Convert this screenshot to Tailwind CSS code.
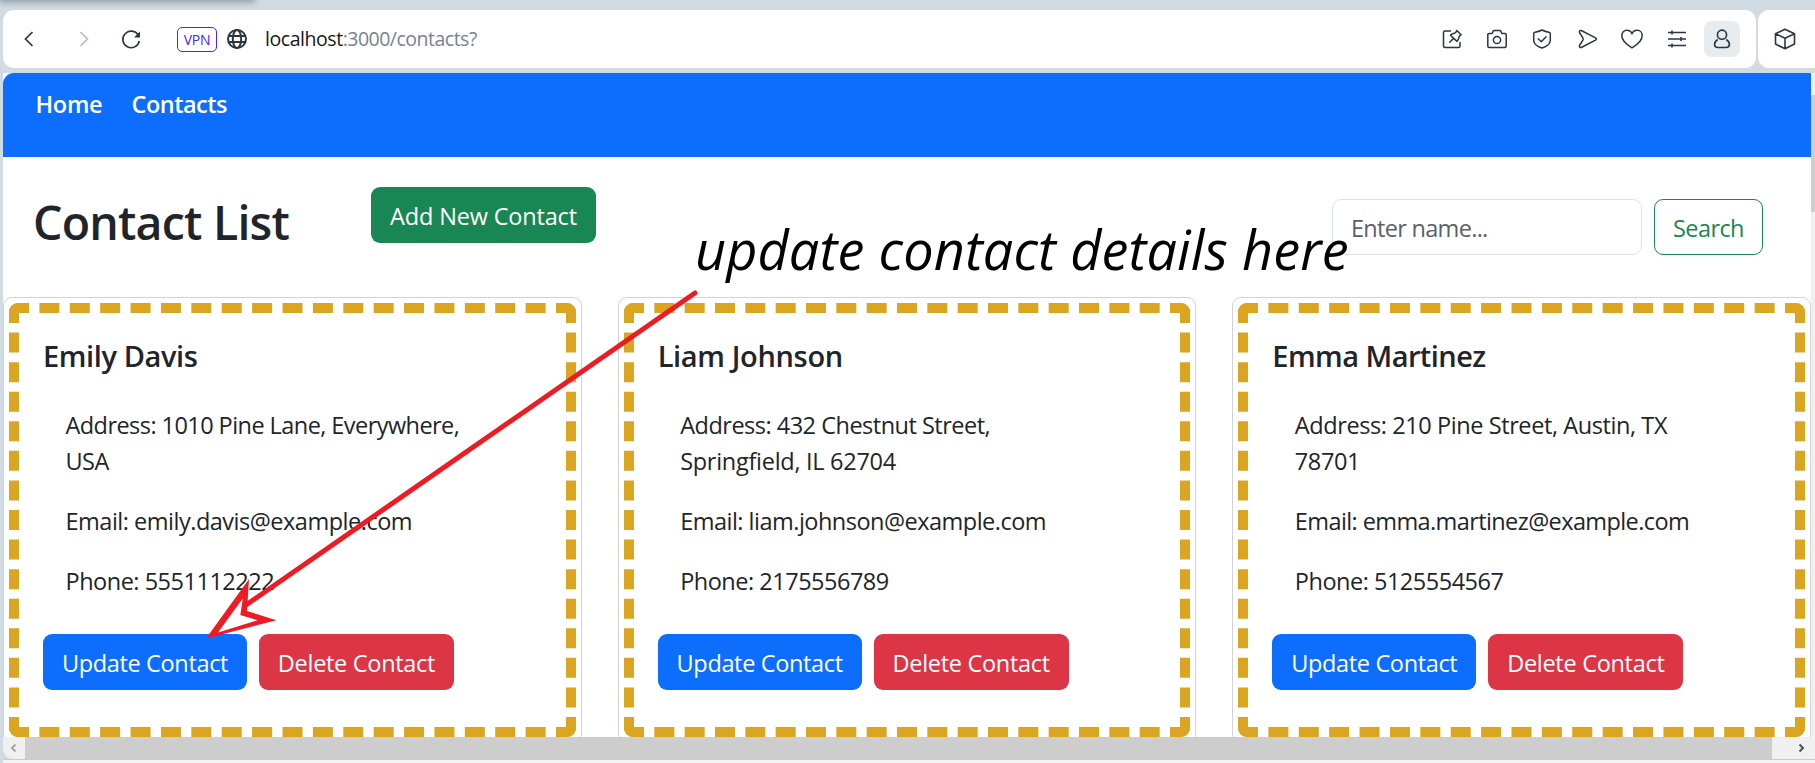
<!DOCTYPE html>
<html lang="en">
<head>
<meta charset="utf-8">
<title>Contacts</title>
<script src="https://cdn.jsdelivr.net/npm/@tailwindcss/browser@4"></script>
</head>
<body class="relative flex h-[763px] w-[1815px] flex-col overflow-hidden bg-[#d0dbe4] font-['Open_Sans','Noto_Sans',sans-serif] text-[23.5px] leading-9 text-[#212529]">

  <!-- tab strip -->
  <div class="h-[10px] shrink-0 overflow-hidden">
    <div class="-mt-3 h-3 w-[253px] bg-[#a3acb3] shadow-[0_0_7px_2px_#8d969d]"></div>
  </div>

  <!-- toolbar -->
  <header class="ml-[3px] flex h-[58px] shrink-0 gap-[2px] text-[#2a3640]">
    <div class="flex w-[1753px] shrink-0 items-center rounded-[11px] bg-white pr-4">
      <svg class="ml-[14px] size-6" viewBox="0 0 24 24" fill="none" stroke="currentColor" stroke-width="1.7"><path d="M15.5 5 8.5 12l7 7"/></svg>
      <svg class="ml-[31px] size-6 text-[#b9bdc1]" viewBox="0 0 24 24" fill="none" stroke="currentColor" stroke-width="1.7"><path d="m8.5 5 7 7-7 7"/></svg>
      <svg class="ml-[23px] size-6" viewBox="0 0 24 24" fill="none" stroke="currentColor" stroke-width="1.6"><path d="M19.3 8.2A8.3 8.3 0 1 0 20.3 14"/><path d="M21 4.4v6h-6z" fill="currentColor" stroke="none"/></svg>
      <div class="ml-[34px] flex h-[25px] w-10 items-center justify-center rounded-[5px] border border-[#4d22ff] pt-[2px] text-[14px] leading-none tracking-[-0.2px] text-[#4d22ff]">VPN</div>
      <svg class="ml-2 size-6" viewBox="0 0 24 24" fill="none" stroke="currentColor" stroke-width="2"><circle cx="12" cy="12" r="9"/><ellipse cx="12" cy="12" rx="4.2" ry="9"/><path d="M3 9h18M3 15h18"/></svg>
      <div class="ml-[16px] flex text-[19.5px] text-[#14181c]"><span class="tracking-[-0.45px]">localhost</span><span class="tracking-[-0.5px] text-[#758391]">:3000/contacts?</span></div>
      <div class="ml-auto flex gap-[9px]">
        <span class="flex size-9 items-center justify-center"><svg class="size-6" viewBox="0 0 24 24" fill="none" stroke="currentColor" stroke-width="1.5" stroke-linejoin="round" stroke-linecap="round"><path d="M10.5 4H5Q3.5 4 3.5 5.500V19Q3.500 20.500 5 20.500H18.500Q20 20.500 20 19V15.500"/><path d="m16.800 3.500 4.300 4.300-1.700 1.200-1.400 4-1 1.400-6.600-6.200 1.400-1 3.900-1.600zM13.400 11.600l-3.700 3.600"/></svg></span>
        <span class="flex size-9 items-center justify-center"><svg class="size-6" viewBox="0 0 24 24" fill="none" stroke="currentColor" stroke-width="1.5" stroke-linejoin="round"><path d="M4 6.500h3.200l1-2.500q.3-.5 1-.5h5.600q.7 0 1 .5l1 2.500H20q1.200 0 1.200 1.200V19q0 1.500-1.500 1.500H4.300q-1.500 0-1.500-1.500V7.700Q2.800 6.500 4 6.500Z"/><circle cx="12" cy="13" r="3.600"/></svg></span>
        <span class="flex size-9 items-center justify-center"><svg class="size-6" viewBox="0 0 24 24" fill="none" stroke="currentColor" stroke-width="1.5" stroke-linejoin="round" stroke-linecap="round"><path d="M12 3Q15 4.700 19 5.300q1.300.2 1.300 1.500V13.500Q20 18.500 12 21 4 18.500 3.700 13.500V6.800Q3.700 5.500 5 5.300 9 4.700 12 3Z"/><path d="m8.300 11.700 3 3 4.800-5"/></svg></span>
        <span class="flex size-9 items-center justify-center"><svg class="ml-[2px] size-6" viewBox="0 0 24 24" fill="none" stroke="currentColor" stroke-width="1.500" stroke-linejoin="round"><path d="M5.300 3.500 19.500 10.800q1.800 1.200 0 2.400L5.300 20.500Q3 21 3.500 18.500L7 12.800q.4-.8 0-1.600L3.500 5.500Q3 3 5.300 3.500Z"/></svg></span>
        <span class="flex size-9 items-center justify-center"><svg class="size-6" viewBox="0 0 24 24" fill="none" stroke="currentColor" stroke-width="1.500" stroke-linejoin="round"><path d="M12 20.800C8 18.500 1.800 14 1.800 8.500 1.800 5.300 4 3.300 6.700 3.300 9 3.300 11.200 4.500 12 6.800 12.800 4.500 15 3.300 17.300 3.300 20 3.300 22.200 5.300 22.200 8.500 22.200 14 16 18.500 12 20.800Z"/></svg></span>
        <span class="flex size-9 items-center justify-center"><svg class="size-6" viewBox="0 0 24 24" fill="none" stroke="currentColor" stroke-width="1.600"><path d="M3 5.500h18M3 12h18M3 18.500h18M7 3.500v4M16 10v4M7 16.500v4"/></svg></span>
        <span class="flex size-9 items-center justify-center rounded-[8px] bg-[#e7ecf0]"><svg class="size-6" viewBox="0 0 24 24" fill="none" stroke="currentColor" stroke-width="1.600"><circle cx="12" cy="7.700" r="4.600"/><path d="M7.700 12.500Q4.600 14.500 4.600 17.500 4.600 20.500 8 20.500H16Q19.400 20.500 19.400 17.500 19.400 14.500 16.300 12.500"/></svg></span>
      </div>
    </div>
    <div class="flex w-[70px] shrink-0 items-center rounded-[11px] bg-white pl-[15px]">
      <svg class="size-6" viewBox="0 0 24 24" fill="none" stroke="currentColor" stroke-width="1.600" stroke-linejoin="round"><path d="M12 2.300 21.500 6.800V17L12 21.800 2.500 17V6.800ZM2.500 6.800 12 11.300l9.500-4.500M12 11.300v10.500"/></svg>
    </div>
  </header>

  <!-- page viewport -->
  <div class="mt-[5px] ml-[3px] flex h-[664px] shrink-0 bg-white">
    <main class="w-[1808px] shrink-0 overflow-hidden">
      <nav class="flex h-[84px] gap-[26px] rounded-tl-[11px] bg-[#0d6efd] pt-[13px] pl-[32.5px] font-semibold text-white">
        <a class="w-[70px] tracking-[-0.3px]">Home</a>
        <a class="tracking-[-0.5px]">Contacts</a>
      </nav>

      <div class="flex h-[140px] pl-[30px]">
        <h1 class="mt-[36px] w-[338px] text-[46.5px] leading-[58px] font-semibold tracking-[-0.8px]">Contact List</h1>
        <a class="mt-[30px] flex h-14 w-[225px] items-center justify-center rounded-[9px] bg-[#198754] pt-[2px] tracking-[-0.17px] text-white">Add New Contact</a>
        <div class="mt-[42px] ml-auto flex gap-3 pr-[48px]">
          <div class="flex h-14 w-[310px] items-center rounded-[9px] border border-[#dee2e6] pt-[2px] pl-[18px] tracking-[-0.7px] text-[#5b6166]">Enter name...</div>
          <div class="flex h-14 w-[109px] items-center justify-center rounded-[9px] border border-[#198754] pt-[2px] tracking-[-0.6px] text-[#198754]">Search</div>
        </div>
      </div>

      <div class="grid grid-cols-3 gap-9">
        <article class="h-[446px] rounded-[9px] border border-[#d2d3d4] p-[5px]">
          <div class="overflow-hidden rounded-[9px]">
            <div class="h-[434px] border-10 border-dashed border-[#daa520] px-6 pt-[25px]">
              <h5 class="text-[29px] font-semibold tracking-[-0.4px]">Emily Davis</h5>
              <div class="mt-[33px] flex flex-col gap-6 pl-[22.5px]">
                <p class="tracking-[-0.56px]">Address: 1010 Pine Lane, Everywhere,<br>USA</p>
                <p class="tracking-[-0.49px]">Email: emily.davis@example.com</p>
                <p class="tracking-[-0.49px]">Phone: 5551112222</p>
              </div>
              <div class="mt-[35px] flex gap-3 text-white">
                <a class="flex h-14 w-[204px] items-center justify-center rounded-[9px] bg-[#0d6efd] pt-[2px] tracking-[-0.35px]">Update Contact</a>
                <a class="flex h-14 w-[195px] items-center justify-center rounded-[9px] bg-[#dc3545] pt-[2px] tracking-[-0.3px]">Delete Contact</a>
              </div>
            </div>
          </div>
        </article>

        <article class="h-[446px] rounded-[9px] border border-[#d2d3d4] p-[5px]">
          <div class="overflow-hidden rounded-[9px]">
            <div class="h-[434px] border-10 border-dashed border-[#daa520] px-6 pt-[25px]">
              <h5 class="text-[29px] font-semibold tracking-[-0.35px]">Liam Johnson</h5>
              <div class="mt-[33px] flex flex-col gap-6 pl-[22.5px]">
                <p><span class="tracking-[-0.5px]">Address: 432 Chestnut Street,</span><br><span class="tracking-[-0.28px]">Springfield, IL 62704</span></p>
                <p class="tracking-[-0.51px]">Email: liam.johnson@example.com</p>
                <p class="tracking-[-0.49px]">Phone: 2175556789</p>
              </div>
              <div class="mt-[35px] flex gap-3 text-white">
                <a class="flex h-14 w-[204px] items-center justify-center rounded-[9px] bg-[#0d6efd] pt-[2px] tracking-[-0.35px]">Update Contact</a>
                <a class="flex h-14 w-[195px] items-center justify-center rounded-[9px] bg-[#dc3545] pt-[2px] tracking-[-0.3px]">Delete Contact</a>
              </div>
            </div>
          </div>
        </article>

        <article class="h-[446px] rounded-[9px] border border-[#d2d3d4] p-[5px]">
          <div class="overflow-hidden rounded-[9px]">
            <div class="h-[434px] border-10 border-dashed border-[#daa520] px-6 pt-[25px]">
              <h5 class="text-[29px] font-semibold tracking-[-0.55px]">Emma Martinez</h5>
              <div class="mt-[33px] flex flex-col gap-6 pl-[22.5px]">
                <p class="tracking-[-0.41px]">Address: 210 Pine Street, Austin, TX<br>78701</p>
                <p class="tracking-[-0.6px]">Email: emma.martinez@example.com</p>
                <p class="tracking-[-0.49px]">Phone: 5125554567</p>
              </div>
              <div class="mt-[35px] flex gap-3 text-white">
                <a class="flex h-14 w-[204px] items-center justify-center rounded-[9px] bg-[#0d6efd] pt-[2px] tracking-[-0.35px]">Update Contact</a>
                <a class="flex h-14 w-[195px] items-center justify-center rounded-[9px] bg-[#dc3545] pt-[2px] tracking-[-0.3px]">Delete Contact</a>
              </div>
            </div>
          </div>
        </article>
      </div>
    </main>
    <div class="w-1 bg-[#f0f0f0] pt-[22px]"><div class="h-[117px] bg-[#cdcdcd]"></div></div>
  </div>

  <!-- horizontal scrollbar -->
  <div class="ml-[3px] flex h-[22px] shrink-0 rounded-bl-[11px] bg-[#f0f0f0]">
    <div class="flex w-[22px] items-center justify-center text-[#a6a6a6]"><svg class="size-3" viewBox="0 0 12 12" fill="none" stroke="currentColor" stroke-width="2"><path d="M7.500 2.500 4 6l3.500 3.500"/></svg></div>
    <div class="w-[1747px] bg-[#cdcdcd]"></div>
    <div class="flex w-[43px] items-center justify-end pr-2 text-[#505050]"><svg class="size-3" viewBox="0 0 12 12" fill="none" stroke="currentColor" stroke-width="2"><path d="M4.500 2.500 8 6 4.500 9.500"/></svg></div>
  </div>
  <div class="ml-[3px] h-1 shrink-0 border-t border-[#c8ccd0] bg-[#f2f3f4]"></div>

  <!-- annotation -->
  <div class="absolute top-[212px] left-[695px] text-[54px] leading-[74px] tracking-[0.12px] whitespace-nowrap text-black italic">update contact details here</div>
  <svg class="absolute top-0 left-0 h-[763px] w-[1815px]" viewBox="0 0 1815 763">
    <path d="M695 293 246 605" stroke="#ed1c24" stroke-width="5" stroke-linecap="round"/>
    <path fill="#ed1c24" fill-rule="evenodd" d="M206 638.500 249 579 247 611 276.500 620.300ZM218 632.500 257.500 620.300 240.300 615 242.800 598.500Z"/>
  </svg>
</body>
</html>
